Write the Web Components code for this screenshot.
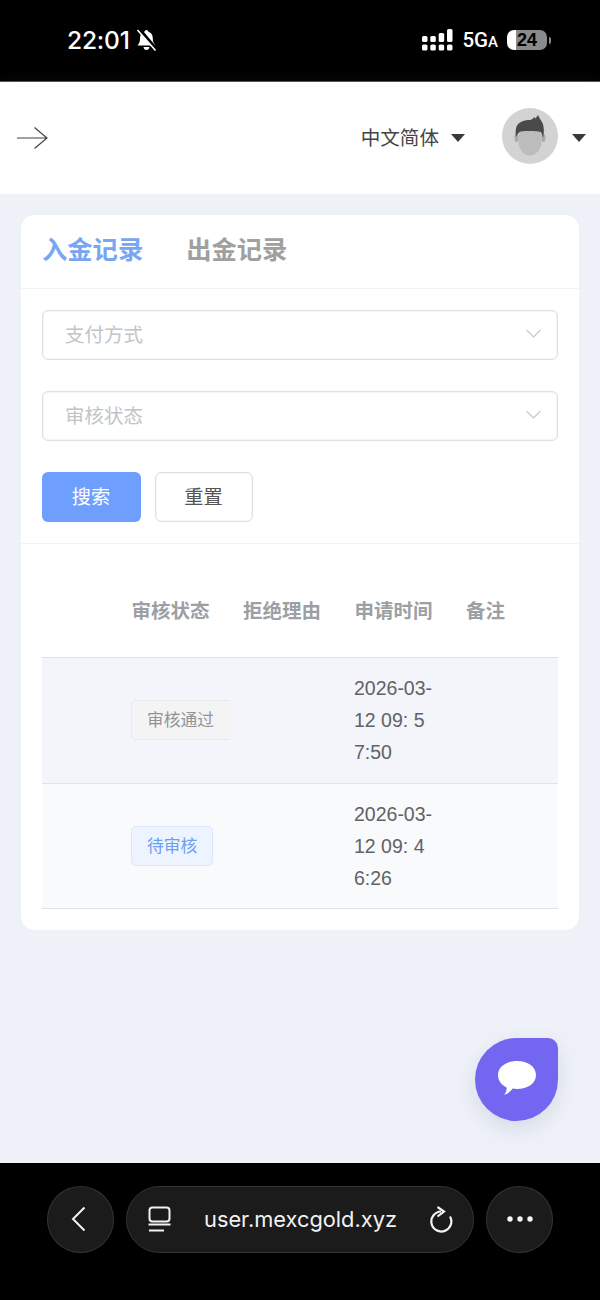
<!DOCTYPE html>
<html lang="zh">
<head>
<meta charset="utf-8">
<title>入金记录</title>
<style>
    html, body { margin: 0; padding: 0; height: 100%; background: #eef1f7; }
    body {
        width: 600px;
        height: 1300px;
        display: flex;
        flex-direction: column;
        overflow: hidden;
        font-family: "Liberation Sans", "Noto Sans CJK SC", sans-serif;
    }
</style>
</head>
<body>
<phone-status></phone-status>
<app-header></app-header>
<page-main>
    <record-card>
        <record-row slot="rows" tone="#f3f5fa" date="2026-03-<br>12 09: 5<br>7:50">
            <status-tag>审核通过</status-tag>
        </record-row>
        <record-row slot="rows" tone="#f9fafb" date="2026-03-<br>12 09: 4<br>6:26">
            <status-tag kind="blue">待审核</status-tag>
        </record-row>
    </record-card>
    <chat-fab></chat-fab>
</page-main>
<browser-bar></browser-bar>

<script>
class PhoneStatus extends HTMLElement {
    constructor() {
        super();
        this.attachShadow({ mode: 'open' });
        this.shadowRoot.innerHTML = `
            <style>
                :host {
                    display: flex;
                    align-items: center;
                    height: 82px;
                    flex: none;
                    background: #000;
                    color: #fff;
                    padding-bottom: 1px;
                    box-sizing: border-box;
                    border-bottom: 1px solid #555;
                }
                #time {
                    margin-left: 67px;
                    font: 500 24.500px "Inter", "Liberation Sans", sans-serif;
                    letter-spacing: -0.200px;
                }
                #bell { margin-left: 6px; }
                #right {
                    margin-left: auto;
                    margin-right: 49px;
                    display: flex;
                    align-items: center;
                }
                #net {
                    margin-left: 9px;
                    font: 500 20.500px "Roboto", "Liberation Sans", sans-serif;
                    white-space: nowrap;
                }
                #net small { font-size: 15px; }
                #battery {
                    margin-left: 9px;
                    width: 40px;
                    height: 20px;
                    border-radius: 7px;
                    background: linear-gradient(90deg, #fff 0 9px, #8a8a8a 9px);
                    color: #000;
                    font: 700 18px/20px "Liberation Sans", sans-serif;
                    text-align: center;
                }
                #cap { width: 2px; height: 7px; margin-left: 2px; background: #8a8a8a; border-radius: 0 2px 2px 0; }
            </style>
            <span id="time">22:01</span>
            <svg id="bell" width="21" height="23" viewBox="0 0 21 23">
                <path d="M10.500 1c1.100 0 1.800.8 1.900 1.800 3.200.9 4.400 3.500 4.400 6.600 0 3.400 1 4.800 2.700 7.100H1.500c1.700-2.300 2.500-3.700 2.500-7.100 0-3.100 1.200-5.700 4.400-6.600C8.700 1.800 9.400 1 10.500 1z" fill="#fff"/>
                <path d="M7.500 18h6c-.2 1.900-1.400 3-3 3s-2.800-1.100-3-3z" fill="#fff"/>
                <path d="M3 0 20 20" stroke="#000" stroke-width="3.600"/>
                <path d="M1.500 1 19.500 21.500" stroke="#fff" stroke-width="1.700"/>
            </svg>
            <div id="right">
                <svg width="31" height="22" viewBox="0 0 31 22" fill="#fff">
                    <rect x="0" y="7" width="5.500" height="6" rx="1.500"/>
                    <rect x="0" y="15.500" width="5.500" height="6" rx="1.500"/>
                    <rect x="8.300" y="7" width="5.500" height="6" rx="1.500"/>
                    <rect x="8.300" y="15.500" width="5.500" height="6" rx="1.500"/>
                    <rect x="16.700" y="4" width="5.500" height="9" rx="1.500"/>
                    <rect x="16.700" y="15.500" width="5.500" height="6" rx="1.500"/>
                    <rect x="25" y="0" width="5.500" height="13" rx="1.500"/>
                    <rect x="25" y="15.500" width="5.500" height="6" rx="1.500"/>
                </svg>
                <span id="net">5G<small>A</small></span>
                <div id="battery">24</div>
                <div id="cap"></div>
            </div>
        `;
    }
}

class AppHeader extends HTMLElement {
    constructor() {
        super();
        this.attachShadow({ mode: 'open' });
        this.shadowRoot.innerHTML = `
            <style>
                :host {
                    display: flex;
                    align-items: center;
                    flex: none;
                    height: 112px;
                    box-sizing: border-box;
                    background: #fff;
                    box-shadow: 0 3px 18px rgba(120, 135, 165, .12);
                    position: relative;
                    padding-left: 16px;
                    color: #444;
                }
                #lang {
                    margin-left: auto;
                    padding-bottom: 4px;
                    font-size: 19.600px;
                    font-family: "Noto Sans CJK SC", sans-serif;
                    color: #444;
                }
                .caret {
                    width: 0;
                    height: 0;
                    border-left: 7px solid transparent;
                    border-right: 7px solid transparent;
                    border-top: 8px solid #3a3a3a;
                }
                #lang-caret { margin-left: 12px; }
                #avatar { margin-left: 37px; margin-bottom: 4px; width: 56px; height: 56px; }
                #user-caret { margin-left: 14px; margin-right: 14px; }
            </style>
            <svg width="32" height="24" viewBox="0 0 32 24" fill="none" stroke="#444" stroke-width="1.200">
                <path d="M1 12H31M18.500 1.500 31 12 18.500 22.500"/>
            </svg>
            <span id="lang">中文简体</span>
            <span class="caret" id="lang-caret"></span>
            <svg id="avatar" viewBox="0 0 56 56">
                <circle cx="28" cy="28" r="28" fill="#d3d3d3"/>
                <ellipse cx="14.500" cy="30" rx="2" ry="4" fill="#a9a9a9"/>
                <ellipse cx="41.500" cy="30" rx="2" ry="4" fill="#a9a9a9"/>
                <path d="M16.500 23h23v11c0 7-5.500 13.500-11.500 13.500S16.500 41 16.500 34z" fill="#bcbcbc"/>
                <path d="M14 29C13 22 14 17 18 14.500 21 12.500 25 12 28 12 30 11.500 31.500 10.500 32 9L33.500 10.500 36 7C37 9.500 38.500 11.500 40 14 42 18 42.500 24 41 30 40.500 28 40 26 39 24 36 23 30 23.500 26 23 22 23 19 23 17.500 24 16 25 15 27 14 29z" fill="#4a4a4a"/>
            </svg>
            <span class="caret" id="user-caret"></span>
        `;
    }
}

class PageMain extends HTMLElement {
    constructor() {
        super();
        this.attachShadow({ mode: 'open' });
        this.shadowRoot.innerHTML = `
            <style>
                :host {
                    display: block;
                    flex: 1;
                    min-height: 0;
                    padding: 21px 21px 0;
                    position: relative;
                    background: #eef1f7;
                }
            </style>
            <slot></slot>
        `;
    }
}

class SelectField extends HTMLElement {
    constructor() {
        super();
        this.attachShadow({ mode: 'open' });
        this.shadowRoot.innerHTML = `
            <style>
                :host {
                    display: flex;
                    align-items: center;
                    justify-content: space-between;
                    height: 50px;
                    box-sizing: border-box;
                    padding: 0 16px 3px 22px;
                    border: 1px solid #dfe0e4;
                    box-shadow: inset 0 0 0 1px #f5f5f7;
                    border-radius: 6px;
                    color: #c2c4c9;
                    font-size: 19.500px;
                    font-family: "Noto Sans CJK SC", sans-serif;
                    background: #fff;
                }
            </style>
            <slot></slot>
            <svg width="15" height="9" viewBox="0 0 15 9" fill="none" stroke="#c6c8cc" stroke-width="1.200">
                <path d="M.5 1 7.500 8 14.500 1"/>
            </svg>
        `;
    }
}

class RecordCard extends HTMLElement {
    constructor() {
        super();
        this.attachShadow({ mode: 'open' });
        this.shadowRoot.innerHTML = `
            <style>
                :host {
                    display: block;
                    width: 558px;
                    background: #fff;
                    border-radius: 14px;
                    font-family: "Noto Sans CJK SC", sans-serif;
                }
                #tabs {
                    display: flex;
                    gap: 43px;
                    align-items: center;
                    height: 74px;
                    box-sizing: border-box;
                    padding: 0 21px 7px;
                    border-bottom: 1px solid #f2f3f5;
                    font-size: 25.300px;
                    font-weight: 700;
                    color: #a0a0a0;
                }
                #tabs .on { color: #78a6f3; }
                #filters {
                    display: flex;
                    flex-direction: column;
                    gap: 31px;
                    padding: 21px;
                    border-bottom: 1px solid #f2f3f5;
                }
                #buttons { display: flex; gap: 14px; }
                button {
                    height: 50px;
                    padding: 0 1px 2px 0;
                    border-radius: 6px;
                    font: 400 19.200px "Noto Sans CJK SC", sans-serif;
                    cursor: pointer;
                }
                #search { width: 99px; background: #6e9fff; border: 0; color: #fff; }
                #reset {
                    width: 98px;
                    background: #fff;
                    border: 1px solid #dfe0e4;
                    box-shadow: inset 0 0 0 1px #f5f5f7;
                    color: #555;
                }
                #table { padding: 0 21px 21px; }
                #head {
                    display: grid;
                    grid-template-columns: 89.500px 111.500px 111.500px 111.500px 1fr;
                    height: 114px;
                    box-sizing: border-box;
                    padding-top: 50px;
                    border-bottom: 1px solid #dfe2e8;
                    color: #9c9fa4;
                    font-size: 19.500px;
                    font-weight: 700;
                    line-height: 32px;
                }
            </style>
            <div id="tabs">
                <span class="on">入金记录</span>
                <span>出金记录</span>
            </div>
            <div id="filters">
                <select-field>支付方式</select-field>
                <select-field>审核状态</select-field>
                <div id="buttons">
                    <button id="search">搜索</button>
                    <button id="reset">重置</button>
                </div>
            </div>
            <div id="table">
                <div id="head">
                    <span></span>
                    <span>审核状态</span>
                    <span>拒绝理由</span>
                    <span>申请时间</span>
                    <span>备注</span>
                </div>
                <slot name="rows"></slot>
            </div>
        `;
    }
}

class RecordRow extends HTMLElement {
    constructor() {
        super();
        this.attachShadow({ mode: 'open' });
        this.shadowRoot.innerHTML = `
            <style>
                :host {
                    display: grid;
                    grid-template-columns: 89px 223px 1fr;
                    align-items: center;
                    height: 125.500px;
                    box-sizing: border-box;
                    border-bottom: 1px solid #dfe2e8;
                }
                #date {
                    font: 400 19.500px/32px "Liberation Sans", sans-serif;
                    color: #606266;
                }
            </style>
            <span></span>
            <div><slot></slot></div>
            <div id="date"></div>
        `;
    }

    connectedCallback() {
        this.style.background = this.getAttribute('tone') || '#fff';
        this.shadowRoot.getElementById('date').innerHTML = this.getAttribute('date') || '';
    }
}

class StatusTag extends HTMLElement {
    constructor() {
        super();
        this.attachShadow({ mode: 'open' });
        this.shadowRoot.innerHTML = `
            <style>
                :host {
                    display: inline-flex;
                    align-items: center;
                    height: 40px;
                    box-sizing: border-box;
                    padding: 0 15px 2px;
                    font-size: 16.800px;
                    font-family: "Noto Sans CJK SC", sans-serif;
                    border: 1px solid #e9e9eb;
                    border-right-color: transparent;
                    border-radius: 5px 0 0 5px;
                    background: #f4f4f5;
                    color: #909399;
                    vertical-align: middle;
                }
                :host([kind="blue"]) {
                    background: #edf3ff;
                    border: 1px solid #dbe7fd;
                    border-radius: 5px;
                    color: #6d9ff2;
                }
            </style>
            <slot></slot>
        `;
    }
}

class ChatFab extends HTMLElement {
    constructor() {
        super();
        this.attachShadow({ mode: 'open' });
        this.shadowRoot.innerHTML = `
            <style>
                :host {
                    position: absolute;
                    left: 475px;
                    top: 844px;
                    width: 83px;
                    height: 83px;
                    display: flex;
                    align-items: center;
                    justify-content: center;
                    background: #7366f0;
                    border-radius: 50% 10px 50% 50%;
                    box-shadow: 0 8px 20px rgba(110, 120, 170, .18);
                }
            </style>
            <svg width="40" height="36" viewBox="0 0 40 36" style="margin-top:-3px">
                <path d="M20 1C30.500 1 39 6.500 39 15s-8.500 14-19 14c-1.500 0-3-.1-4.300-.4C13.500 31.300 10.500 34.500 7 34.800c1.600-1.500 2.600-3.800 2.700-7.300C4.500 25 1 20.500 1 15 1 6.500 9.500 1 20 1z" fill="#fff"/>
            </svg>
        `;
    }
}

class BrowserBar extends HTMLElement {
    constructor() {
        super();
        this.attachShadow({ mode: 'open' });
        this.shadowRoot.innerHTML = `
            <style>
                :host {
                    display: flex;
                    flex: none;
                    height: 137px;
                    box-sizing: border-box;
                    padding: 23px 47px 0;
                    gap: 12px;
                    background: #000;
                    color: #f2f2f2;
                    align-items: flex-start;
                }
                .pill {
                    height: 66.500px;
                    box-sizing: border-box;
                    background: #1b1b1b;
                    border: 1px solid #333;
                    display: flex;
                    align-items: center;
                    justify-content: center;
                }
                .round { width: 67px; border-radius: 50%; flex: none; }
                #address {
                    width: 348px;
                    flex: none;
                    border-radius: 34px;
                    justify-content: flex-start;
                    padding-left: 21px;
                    font: 400 21.800px "Inter", "Liberation Sans", sans-serif;
                }
                #url { margin-left: 33px; white-space: nowrap; }
                #reload { margin-left: 33px; }
            </style>
            <div class="pill round">
                <svg width="15" height="26" viewBox="0 0 15 26" fill="none" stroke="#f2f2f2" stroke-width="2" style="margin-right:5px">
                    <path d="M13.500 1.500 2 13 13.500 24.500"/>
                </svg>
            </div>
            <div class="pill" id="address">
                <svg width="23" height="26" viewBox="0 0 23 26" fill="none" stroke="#f2f2f2" stroke-width="2" style="flex:none">
                    <rect x="1.500" y="1.500" width="20" height="14" rx="3"/>
                    <path d="M0.500 18.500H22.500"/>
                    <path d="M1 24.500H16"/>
                </svg>
                <span id="url">user.mexcgold.xyz</span>
                <svg id="reload" width="23" height="27" viewBox="0 0 23 27" fill="none" stroke="#f2f2f2" stroke-width="2.200" style="flex:none">
                    <path d="M11 5.500A10 10 0 1 0 20 10.500"/>
                    <path d="M7.500 1 14 5.500 7.500 10.500"/>
                </svg>
            </div>
            <div class="pill round">
                <svg width="26" height="6" viewBox="0 0 26 6" fill="#f6f6f6">
                    <circle cx="3" cy="3" r="2.700"/>
                    <circle cx="13" cy="3" r="2.700"/>
                    <circle cx="23" cy="3" r="2.700"/>
                </svg>
            </div>
        `;
    }
}

customElements.define('phone-status', PhoneStatus);
customElements.define('app-header', AppHeader);
customElements.define('page-main', PageMain);
customElements.define('select-field', SelectField);
customElements.define('record-card', RecordCard);
customElements.define('record-row', RecordRow);
customElements.define('status-tag', StatusTag);
customElements.define('chat-fab', ChatFab);
customElements.define('browser-bar', BrowserBar);
</script>
</body>
</html>
